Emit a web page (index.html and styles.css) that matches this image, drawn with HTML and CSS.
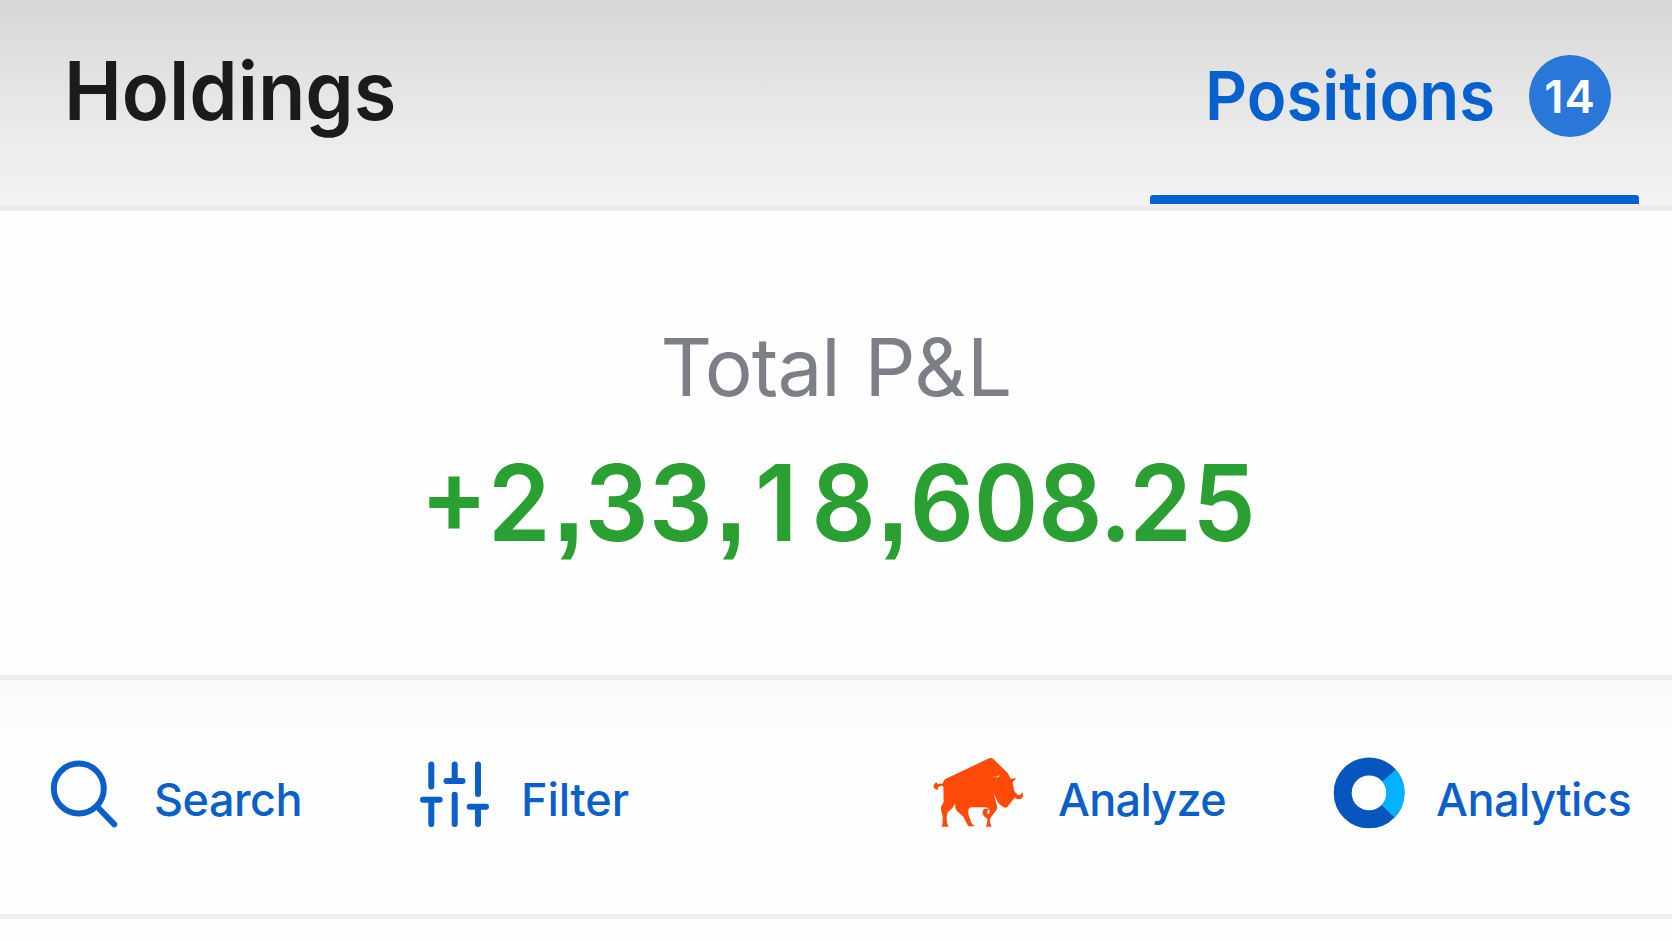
FILE: index.html
```html
<!DOCTYPE html>
<html lang="en">
<head>
  <meta charset="UTF-8">
  <meta name="viewport" content="width=device-width, initial-scale=1.0">
  <title>Positions</title>
  <link rel="stylesheet" href="styles.css">
</head>
<body>
  <nav class="tabs">
    <a class="tab holdings">Holdings</a>
    <a class="tab active">
      <span class="tab-row">
        <span class="positions">Positions</span>
        <span class="count">14</span>
      </span>
      <span class="underline"></span>
    </a>
  </nav>

  <section class="summary">
    <div class="summary-label"><span class="word">Total</span> P&amp;L</div>
    <div class="summary-value"><span class="sign">+</span>2<span class="comma">,</span>33<span class="comma">,</span><span class="one">1</span>8<span class="comma">,</span>608.25</div>
  </section>

  <div class="actions">
    <a class="action search">
      <svg width="68" height="68" viewBox="0 0 68 68" fill="none" stroke="#0b5fc9" stroke-width="6" stroke-linecap="round">
        <circle cx="28.8" cy="28.5" r="25"/>
        <path d="M47 46.5L64.3 64.3"/>
      </svg>
      <span class="action-label">Search</span>
    </a>
    <a class="action filter">
      <svg width="71" height="68" viewBox="0 0 71 68" fill="none" stroke="#0b5fc9" stroke-width="6" stroke-linecap="round">
        <path d="M12.3 4.5V26.5M4 39.7H20.7M12.3 39.7V64"/>
        <path d="M35.7 4.5V21M27.5 21H43.5M35.7 34.7V64"/>
        <path d="M59 4.5V34M50.7 46.7H67M59 46.7V64"/>
      </svg>
      <span class="action-label">Filter</span>
    </a>
    <a class="action analyze">
      <!-- bull -->
      <svg width="91" height="71" viewBox="40 35 273 213" fill="#ff4a0a">
        <path d="M76 102L208 39Q215 36 220 40L264 83L273 100Q282 101 289 97Q287 105 279 110L283 134Q289 149 299 149Q306 149 306 139Q314 151 307 158Q298 166 285 157L268 178Q262 189 256 187L246 182L236 173L231 163L223 145Q224 156 228 166L232 182Q235 188 229 196L216 213Q209 222 211 231L216 244H199L203 230L203 220Q195 217 190 208Q186 194 195 190L206 190L204 199Q201 203 205 207Q212 202 209 195Q206 186 196 186H152Q145 189 146 200Q145 209 151 220L155 233L165 243H146L141 234L131 214L111 196Q105 186 106 174L99 187L85 200Q80 208 81 220L82 233L87 244H66L69 233L69 213Q62 192 65 183L72 170L71 124Q66 119 57 124Q52 129 57 132Q48 135 43 128Q39 119 47 113Q53 109 54 117Q64 112 68 116Q70 108 76 102Z"/>
        <path d="M221 91L226 93L224 97Z M228 94L241 90L239 94L230 97Z" fill="#ffd0a8"/>
      </svg>
      <span class="action-label">Analyze</span>
    </a>
    <a class="action analytics">
      <svg width="72" height="72" viewBox="0 0 72 72" fill="none" stroke-width="18">
        <circle cx="36.1" cy="35.9" r="26.4" stroke="#0756bd"/>
        <path d="M56 18.5A26.4 26.4 0 0 1 55.1 54.3" stroke="#00b2ff"/>
      </svg>
      <span class="action-label">Analytics</span>
    </a>
  </div>
</body>
</html>
```
FILE: styles.css
```css
* {
  box-sizing: border-box;
}

body {
  margin: 0;
  height: 941px;
  overflow: hidden;
  background-color: #fefefe;
  font-family: 'Inter', sans-serif;
}

.tabs {
  display: flex;
  justify-content: space-between;
  height: 211px;
  padding: 0 33px 0 64px;
  border-bottom: 6px solid #ececee;
  background: linear-gradient(#d6d6d6, #dfdfdf 25%, #ebebeb 65%, #f3f3f4) padding-box;
}

.tab {
  line-height: 100px;
  white-space: nowrap;
}

.holdings {
  padding-top: 41px;
  color: #1b1b1c;
  font-size: 81px;
  font-weight: 600;
  transform: scaleX(0.957);
  transform-origin: left;
}

.active {
  display: flex;
  flex-direction: column;
  justify-content: space-between;
  width: 490px;
  height: 204px;
  color: #0561cd;
}

.tab-row {
  display: flex;
  padding-left: 56px;
}

.positions {
  width: 290px;
  padding-top: 45px;
  font-size: 68px;
  font-weight: 600;
  transform: scaleX(0.96);
  transform-origin: left;
}

.count {
  width: 82px;
  height: 82px;
  margin: 55px 0 0 34px;
  border-radius: 50%;
  background-color: #2877d9;
  color: white;
  font-size: 45.5px;
  font-weight: 600;
  letter-spacing: 1px;
  line-height: 84px;
  text-align: center;
}

.underline {
  height: 9px;
  border-radius: 3px 3px 0 0;
  background-color: #0462d3;
  margin-left: 1px;
}

.summary {
  height: 469px;
  padding-top: 106px;
  border-bottom: 5px solid #ebecee;
  text-align: center;
}

.summary-label {
  padding-left: 2px;
  line-height: 100px;
  color: #7d7f87;
  font-size: 80px;
  letter-spacing: 1.3px;
}

.word {
  margin-right: 1px;
  letter-spacing: -1px;
}

.summary-value {
  padding-top: 21px;
  line-height: 130px;
  color: #29a031;
  font-size: 106px;
  font-weight: 600;
  font-variant-numeric: tabular-nums;
  letter-spacing: -1px;
  white-space: nowrap;
  transform: translateX(3px) scaleX(0.95);
}

.sign {
  margin-right: 1px;
  font-feature-settings: 'case', 'tnum';
}

.comma {
  margin: 0 2px;
  font-family: 'Liberation Sans', sans-serif;
  font-size: 118px;
  font-weight: 700;
  line-height: 1px;
}

.one {
  display: inline-block;
  width: 67px;
  padding-left: 8px;
  font-variant-numeric: normal;
  text-align: left;
}

.actions {
  display: grid;
  grid-template-columns: 369px 514px 400px auto;
  align-items: start;
  height: 239px;
  padding: 77px 0 0 50px;
  border-bottom: 5px solid #f0f0f2;
  background: linear-gradient(#f9f9f9, #fefefe 60px);
}

.action {
  display: flex;
  color: #0b5fc9;
  font-size: 45px;
  font-weight: 500;
  letter-spacing: -0.5px;
}

.action-label {
  padding-top: 15px;
  line-height: 56px;
}

.search svg,
.filter svg {
  margin-top: 3px;
}

.search .action-label {
  margin-left: 36px;
}

.filter .action-label {
  margin-left: 31px;
  letter-spacing: -0.1px;
}

.analyze .action-label {
  margin-left: 34px;
  letter-spacing: -0.7px;
}

.analytics .action-label {
  margin-left: 31px;
}
```
